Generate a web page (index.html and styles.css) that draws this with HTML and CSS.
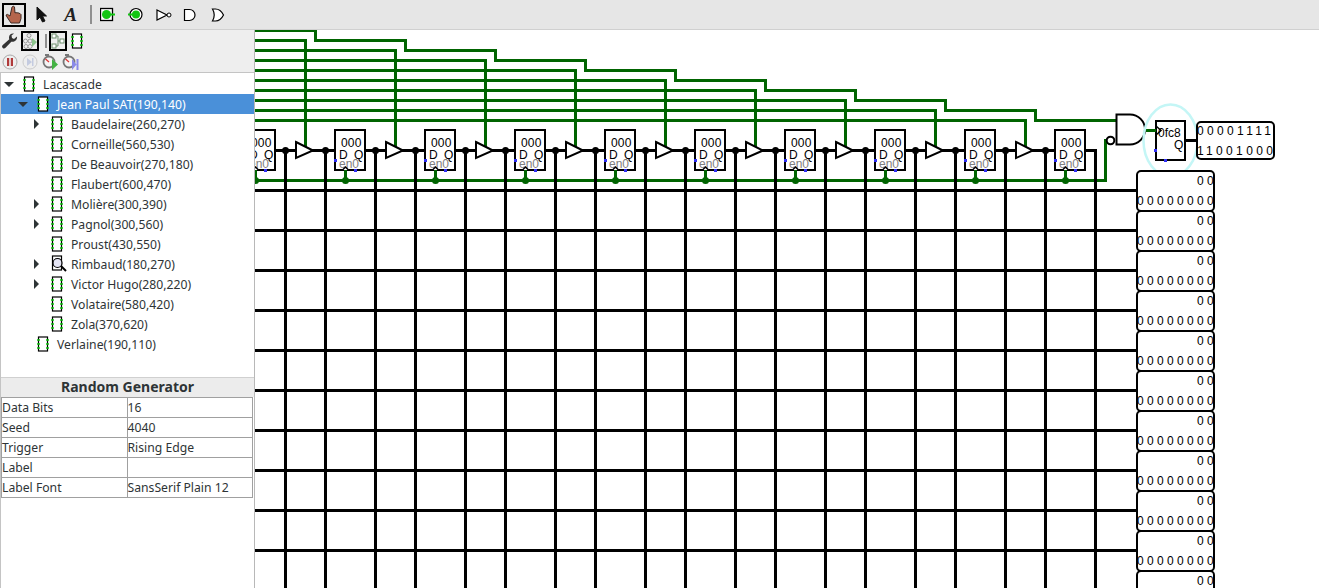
FILE: index.html
```html
<!DOCTYPE html>
<html lang="en">
<head>
    <meta charset="UTF-8">
    <title>Logisim - Lacascade</title>
    <link rel="stylesheet" href="styles.css">
</head>
<body>
<svg class="defs" width="0" height="0">
  <defs>
    <symbol id="ic-circuit" viewBox="0 0 12 16">
      <rect x="1.500" y="1" width="9" height="14" fill="#fff" stroke="#000" stroke-width="1.200"/>
      <path d="M0 4h3M0 8h3M0 12h3M9 4h3M9 8h3M9 12h3" stroke="#11c511" stroke-width="1.600"/>
    </symbol>
    <g id="ff">
      <rect x="335" y="130" width="30" height="40" fill="#fff" stroke="#000" stroke-width="2" shape-rendering="crispEdges"/>
      <text class="lg" x="341" y="147" letter-spacing="0.2">000</text>
      <text class="lg" x="339" y="159">D</text>
      <text class="lg" x="354" y="159">Q</text>
      <text class="lg en" x="339" y="168">en0</text>
      <path d="M342.500 170l3-3 3 3" fill="#fff" stroke="#000" stroke-width="1.500"/>
      <path d="M334 159h3v3h-3zM354 169h3v3h-3z" fill="#2f2ff5" shape-rendering="crispEdges"/>
      <path d="M345.500 170v10" stroke="#006400" stroke-width="3"/>
      <circle cx="345.500" cy="180.500" r="3.500" fill="#006400"/>
    </g>
    <polygon id="buf" points="296,142 313,150.500 296,158" fill="#fff" stroke="#000" stroke-width="2"/>
    <g id="reg">
      <rect x="1137" y="171" width="77" height="40" rx="4" fill="#fff" stroke="#000" stroke-width="2"/>
      <text class="lg spaced" x="1197" y="185">00</text>
      <text class="lg spaced" x="1137" y="205">00000000</text>
    </g>
  </defs>
</svg>

<div class="app">
  <div class="toolbar">
    <div class="tool selected">
      <svg width="20" height="20" viewBox="0 0 20 20"><path d="M8 2c1-1 2-1 2.500 0l.5 6 1-.5 1 .5 1-.3 1 .6 1 .2 1 1v4l-1.500 4.500H7L3 12l-1-2 1.500-.6L6 11z" fill="#b5654c" stroke="#3c2a24" stroke-width="1"/></svg>
    </div>
    <div class="tool">
      <svg width="14" height="18" viewBox="0 0 14 18"><path d="M2 1v13l3-3 2.500 5 2.500-1-2.500-5h4z" fill="#111" stroke="#111"/></svg>
    </div>
    <div class="tool"><span class="text-tool">A</span></div>
    <div class="sep"></div>
    <div class="tool">
      <svg width="16" height="16" viewBox="0 0 16 16"><rect x="0.500" y="1.500" width="12" height="12" fill="#fff" stroke="#000" stroke-width="1.300"/><circle cx="6.500" cy="7.500" r="4.500" fill="#11c511"/><path d="M10 7.500h5" stroke="#11c511" stroke-width="2"/></svg>
    </div>
    <div class="tool">
      <svg width="16" height="16" viewBox="0 0 16 16"><circle cx="8" cy="7.500" r="6" fill="#fff" stroke="#000" stroke-width="1.200"/><circle cx="8" cy="7.500" r="4" fill="#11c511"/><path d="M0 7.500h6" stroke="#11c511" stroke-width="2"/></svg>
    </div>
    <div class="tool">
      <svg width="16" height="14" viewBox="0 0 16 14"><path d="M1 2l10 5-10 5z" fill="#fff" stroke="#000" stroke-width="1.200"/><circle cx="13" cy="7" r="2" fill="#fff" stroke="#000"/></svg>
    </div>
    <div class="tool shift">
      <svg width="14" height="14" viewBox="0 0 14 14"><path d="M1.500 1.500h5a5.500 5.500 0 0 1 0 11h-5z" fill="#fff" stroke="#000" stroke-width="1.200"/></svg>
    </div>
    <div class="tool shift">
      <svg width="14" height="14" viewBox="0 0 14 14"><path d="M1.500 1h3c4 0 6.500 3 8 6-1.500 3-4 6-8 6h-3c2-3.500 2-8.500 0-12z" fill="#fff" stroke="#000" stroke-width="1.200"/></svg>
    </div>
  </div>

  <div class="main">
    <div class="side">
      <div class="subbar">
        <div class="sub-tool">
          <svg width="16" height="16" viewBox="0 0 16 16"><path d="M15 3.500l-3 2.500-2-1-.5-2.500L12 .5C9.500 0 7 1.500 7 4.500c0 .7.100 1.200.3 1.700L.8 12c-1 1-1 2 0 3s2 .6 3-.4l5.500-5.900c3 .8 6.200-1.700 5.700-5.200z" fill="#333"/></svg>
        </div>
        <div class="sub-tool boxed first">
          <svg width="14" height="16" viewBox="0 0 14 16"><g fill="#eee" stroke="#999"><circle cx="6" cy="2.500" r="2"/><circle cx="2.500" cy="8" r="2"/><circle cx="7" cy="8" r="2"/><circle cx="3" cy="13.500" r="2"/><circle cx="7" cy="13.500" r="2"/></g><path d="M9 5l5 4-5 5z" fill="#8cc48c"/></svg>
        </div>
        <div class="sub-sep"></div>
        <div class="sub-tool boxed">
          <svg width="14" height="16" viewBox="0 0 14 16"><g fill="#fff" stroke="#6f8f6f"><rect x="1" y="1" width="4" height="4"/><rect x="1" y="11" width="4" height="4"/><rect x="9" y="6" width="4" height="4"/></g><path d="M5 3h2v10H5M7 8h2" fill="none" stroke="#6f8f6f"/></svg>
        </div>
        <div class="sub-tool">
          <svg width="12" height="16"><use href="#ic-circuit"/></svg>
        </div>
      </div>
      <div class="subbar sim">
        <div class="sub-tool">
          <svg width="16" height="16" viewBox="0 0 16 16"><circle cx="8" cy="8" r="7" fill="#eee" stroke="#aaa"/><path d="M5 4h2.200v8H5zM8.800 4H11v8H8.800z" fill="#b03a3a"/></svg>
        </div>
        <div class="sub-tool">
          <svg width="16" height="16" viewBox="0 0 16 16"><circle cx="8" cy="8" r="7" fill="#eee" stroke="#ccc"/><path d="M5 4l5 4-5 4zM10 4h1.500v8H10z" fill="#c4cbe0"/></svg>
        </div>
        <div class="sub-tool">
          <svg width="17" height="17" viewBox="0 0 17 17"><circle cx="7" cy="9" r="5.500" fill="#f4f4f4" stroke="#777" stroke-width="1.800"/><path d="M3 2h4" stroke="#777" stroke-width="2"/><path d="M7 9L3.500 6" stroke="#d33" stroke-width="1.200"/><path d="M10 6l6 5.500-6 5.500z" fill="#44b344"/></svg>
        </div>
        <div class="sub-tool">
          <svg width="17" height="17" viewBox="0 0 17 17"><circle cx="7" cy="9" r="5.500" fill="#f4f4f4" stroke="#777" stroke-width="1.800"/><path d="M3 2h4" stroke="#777" stroke-width="2"/><path d="M7 9L3.500 6" stroke="#d33" stroke-width="1.200"/><path d="M10 6l4.500 5.500-4.500 5.500zM14.500 6H16.500v11h-2z" fill="#8a8ae8"/></svg>
        </div>
      </div>

      <div class="tree">
        <div class="row l0"><span class="arrow open"></span><svg class="ic" width="12" height="16"><use href="#ic-circuit"/></svg><span>Lacascade</span></div>
        <div class="row l1 active"><span class="arrow open"></span><svg class="ic" width="12" height="16"><use href="#ic-circuit"/></svg><span>Jean Paul SAT(190,140)</span></div>
        <div class="row l2"><span class="arrow closed"></span><svg class="ic" width="12" height="16"><use href="#ic-circuit"/></svg><span>Baudelaire(260,270)</span></div>
        <div class="row l2"><span class="arrow"></span><svg class="ic" width="12" height="16"><use href="#ic-circuit"/></svg><span>Corneille(560,530)</span></div>
        <div class="row l2"><span class="arrow"></span><svg class="ic" width="12" height="16"><use href="#ic-circuit"/></svg><span>De Beauvoir(270,180)</span></div>
        <div class="row l2"><span class="arrow"></span><svg class="ic" width="12" height="16"><use href="#ic-circuit"/></svg><span>Flaubert(600,470)</span></div>
        <div class="row l2"><span class="arrow closed"></span><svg class="ic" width="12" height="16"><use href="#ic-circuit"/></svg><span>Molière(300,390)</span></div>
        <div class="row l2"><span class="arrow closed"></span><svg class="ic" width="12" height="16"><use href="#ic-circuit"/></svg><span>Pagnol(300,560)</span></div>
        <div class="row l2"><span class="arrow"></span><svg class="ic" width="12" height="16"><use href="#ic-circuit"/></svg><span>Proust(430,550)</span></div>
        <div class="row l2"><span class="arrow closed"></span>
          <svg class="ic" width="16" height="18" viewBox="0 0 16 18"><rect x="1.500" y="1" width="9" height="14" fill="#fff" stroke="#000" stroke-width="1.200"/><circle cx="6.500" cy="8" r="4.500" fill="#e4e4f4" stroke="#000" stroke-width="1.200"/><path d="M10 11l5 5" stroke="#000" stroke-width="2"/></svg>
          <span class="after-glass">Rimbaud(180,270)</span></div>
        <div class="row l2"><span class="arrow closed"></span><svg class="ic" width="12" height="16"><use href="#ic-circuit"/></svg><span>Victor Hugo(280,220)</span></div>
        <div class="row l2"><span class="arrow"></span><svg class="ic" width="12" height="16"><use href="#ic-circuit"/></svg><span>Volataire(580,420)</span></div>
        <div class="row l2"><span class="arrow"></span><svg class="ic" width="12" height="16"><use href="#ic-circuit"/></svg><span>Zola(370,620)</span></div>
        <div class="row l1"><span class="arrow"></span><svg class="ic" width="12" height="16"><use href="#ic-circuit"/></svg><span>Verlaine(190,110)</span></div>
      </div>

      <div class="attrs">
        <div class="attrs-title">Random Generator</div>
        <table class="attr-table">
          <tr><td>Data Bits</td><td>16</td></tr>
          <tr><td>Seed</td><td>4040</td></tr>
          <tr><td>Trigger</td><td>Rising Edge</td></tr>
          <tr><td>Label</td><td></td></tr>
          <tr><td>Label Font</td><td>SansSerif Plain 12</td></tr>
        </table>
      </div>
    </div>

    <div class="canvas">
      <svg class="circuit" width="1064" height="558" viewBox="255 30 1064 558">
        <!-- wires -->
        <g class="wire-set" transform="translate(0.5 0.5)">
          <g class="green crisp">
            <path d="M254 30H315V40H405V50H495V60H585V70H675V80H765V90H855V100H945V110H1035V120H1116"/>
            <path d="M254 40H305V146"/>
            <path d="M254 50H395V146"/>
            <path d="M254 60H485V146"/>
            <path d="M254 70H575V146"/>
            <path d="M254 80H665V146"/>
            <path d="M254 90H755V146"/>
            <path d="M254 100H845V146"/>
            <path d="M254 110H935V146"/>
            <path d="M254 120H1025V146"/>
            <path d="M254 180H1105V140H1110"/>
            <path d="M255 170V180"/>
            <path d="M1145 130H1155"/>
          </g>
          <g class="black crisp">
            <path d="M254 150H1095V588"/>
            <path d="M1185 140H1196"/>
            <path d="M254 190H1136M254 230H1136M254 270H1136M254 310H1136M254 350H1136M254 390H1136M254 430H1136M254 470H1136M254 510H1136M254 550H1136"/>
            <path d="M285 150V588M325 150V588M375 150V588M415 150V588M465 150V588M505 150V588M555 150V588M595 150V588M645 150V588M685 150V588M735 150V588M775 150V588M825 150V588M865 150V588M915 150V588M955 150V588M1005 150V588M1045 150V588"/>
          </g>
          <g fill="#000">
            <circle cx="285" cy="150" r="3.500"/><circle cx="325" cy="150" r="3.500"/><circle cx="375" cy="150" r="3.500"/><circle cx="415" cy="150" r="3.500"/><circle cx="465" cy="150" r="3.500"/><circle cx="505" cy="150" r="3.500"/><circle cx="555" cy="150" r="3.500"/><circle cx="595" cy="150" r="3.500"/><circle cx="645" cy="150" r="3.500"/><circle cx="685" cy="150" r="3.500"/><circle cx="735" cy="150" r="3.500"/><circle cx="775" cy="150" r="3.500"/><circle cx="825" cy="150" r="3.500"/><circle cx="865" cy="150" r="3.500"/><circle cx="915" cy="150" r="3.500"/><circle cx="955" cy="150" r="3.500"/><circle cx="1005" cy="150" r="3.500"/><circle cx="1045" cy="150" r="3.500"/>
          </g>
        </g>

        <!-- flip flops and buffers, one per 90px -->
        <use href="#ff" x="-90"/><use href="#ff"/><use href="#ff" x="90"/><use href="#ff" x="180"/><use href="#ff" x="270"/><use href="#ff" x="360"/><use href="#ff" x="450"/><use href="#ff" x="540"/><use href="#ff" x="630"/><use href="#ff" x="720"/>
        <use href="#buf"/><use href="#buf" x="90"/><use href="#buf" x="180"/><use href="#buf" x="270"/><use href="#buf" x="360"/><use href="#buf" x="450"/><use href="#buf" x="540"/><use href="#buf" x="630"/><use href="#buf" x="720"/>

        <!-- NAND into the random generator -->
        <path d="M1116.500 114.500H1130a15 15 0 0 1 0 30H1116.500z" fill="#fff" stroke="#000" stroke-width="2"/>
        <circle cx="1110.500" cy="140.500" r="3.800" fill="#fff" stroke="#000" stroke-width="2"/>
        <ellipse cx="1170.500" cy="140.500" rx="27" ry="36" fill="none" stroke="#c4f6f6" stroke-width="2.500"/>
        <rect x="1156" y="121" width="29" height="39" fill="#fff" stroke="#000" stroke-width="2" shape-rendering="crispEdges"/>
        <path d="M1156 126l5 4.500-5 4.500" fill="none" stroke="#000" stroke-width="1.500"/>
        <path d="M1154 149h3v3h-3zM1164 159h3v3h-3z" fill="#2f2ff5" shape-rendering="crispEdges"/>
        <text class="lg" x="1158" y="137">0fc8</text>
        <text class="lg" x="1174" y="149">Q</text>
        <path d="M1156 130.500H1150" stroke="#006400" stroke-width="3"/>

        <!-- hex displays -->
        <rect x="1197" y="122" width="77" height="37" rx="4" fill="#fff" stroke="#000" stroke-width="2"/>
        <text class="lg spaced" x="1197" y="135">00001111</text>
        <text class="lg spaced" x="1197" y="155">11001000</text>
        <use href="#reg"/><use href="#reg" y="40"/><use href="#reg" y="80"/><use href="#reg" y="120"/><use href="#reg" y="160"/><use href="#reg" y="200"/><use href="#reg" y="240"/><use href="#reg" y="280"/><use href="#reg" y="320"/><use href="#reg" y="360"/><use href="#reg" y="400"/>
      </svg>
    </div>
  </div>
</div>
</body>
</html>
```
FILE: styles.css
```css
body {
    margin: 0;
    font-family: "Noto Sans", sans-serif;
    font-size: 12.2px;
    color: #2e3436;
    overflow: hidden;
}
.defs {
    position: absolute;
}
.app {
    display: flex;
    flex-direction: column;
    width: 1319px;
    height: 588px;
    overflow: hidden;
}
.toolbar {
    display: flex;
    align-items: center;
    height: 30px;
    background-color: #e6e6e6;
    box-sizing: border-box;
    border-bottom: 1px solid #d0d0d0;
}
.tool {
    display: flex;
    align-items: center;
    justify-content: center;
    width: 28px;
    height: 24px;
    box-sizing: border-box;
}
.tool.selected {
    width: 24px;
    margin: 0 2px;
    border: 2px solid #000;
}
.tool.shift {
    position: relative;
    left: -2px;
}
.text-tool {
    padding-left: 1px;
    font-family: "Liberation Serif", serif;
    font-size: 19px;
    font-weight: bold;
    font-style: italic;
    color: #222;
}
.sep {
    width: 2px;
    height: 19px;
    margin: 0 2px 0 6px;
    background-color: #8f8f8f;
}
.main {
    display: flex;
    flex: 1;
    min-height: 0;
}
.side {
    display: flex;
    flex-direction: column;
    flex: none;
    width: 255px;
    background-color: #fff;
    border-right: 1px solid #b8b8b8;
    box-sizing: border-box;
}
.subbar {
    display: flex;
    align-items: center;
    height: 21px;
    background-color: #eeeeee;
}
.subbar.sim {
    height: 22px;
    border-bottom: 1px solid #c4c4c4;
    box-sizing: border-box;
}
.sub-tool {
    display: flex;
    align-items: center;
    justify-content: center;
    width: 20px;
    height: 20px;
    box-sizing: border-box;
}
.sub-tool.boxed {
    width: 18px;
    border: 2px solid #000;
}
.sub-tool.first {
    margin-left: 1px;
}
.sub-sep {
    width: 2px;
    height: 14px;
    margin: 0 2px 0 6px;
    background-color: #8f8f8f;
}
.tree {
    height: 304px;
    padding-top: 1px;
    box-sizing: border-box;
    border-left: 1px solid #c4c4c4;
}
.row {
    display: flex;
    align-items: center;
    height: 20px;
    white-space: nowrap;
}
.row.l0 { padding-left: 3px; }
.row.l1 { padding-left: 17px; }
.row.l2 { padding-left: 31px; }
.row.active {
    background-color: #4a90d9;
    color: #fff;
}
.arrow {
    flex: none;
    width: 19px;
    height: 10px;
    position: relative;
}
.arrow.open::before {
    content: "";
    position: absolute;
    left: 0;
    top: 3px;
    border-left: 5px solid transparent;
    border-right: 5px solid transparent;
    border-top: 5px solid #2e3436;
}
.arrow.closed::before {
    content: "";
    position: absolute;
    left: 2px;
    top: 0;
    border-top: 5px solid transparent;
    border-bottom: 5px solid transparent;
    border-left: 5px solid #2e3436;
}
.ic {
    flex: none;
    margin-right: 8px;
}
.after-glass {
    margin-left: -4px;
}
.attrs {
    flex: 1;
    border-left: 1px solid #c4c4c4;
}
.attrs-title {
    height: 20px;
    line-height: 18px;
    text-align: center;
    font-size: 14px;
    font-weight: bold;
    background-color: #ececec;
    border-top: 1px solid #d0d0d0;
    box-sizing: border-box;
}
.attr-table {
    width: 252px;
    table-layout: fixed;
    border-collapse: collapse;
    border: 1px solid #a0a0a0;
}
.attr-table td {
    height: 19px;
    padding: 0;
    border: 1px solid #a0a0a0;
    white-space: nowrap;
}
.canvas {
    flex: 1;
    background-color: #fff;
    overflow: hidden;
}
.circuit {
    display: block;
}
.crisp {
    shape-rendering: crispEdges;
    fill: none;
    stroke-width: 3;
}
.green { stroke: #006400; }
.black { stroke: #000; }
.lg {
    font-family: "Liberation Sans", sans-serif;
    font-size: 12px;
    fill: #000;
}
.lg.en { fill: #808080; }
.lg.spaced { letter-spacing: 3.33px; }
```
